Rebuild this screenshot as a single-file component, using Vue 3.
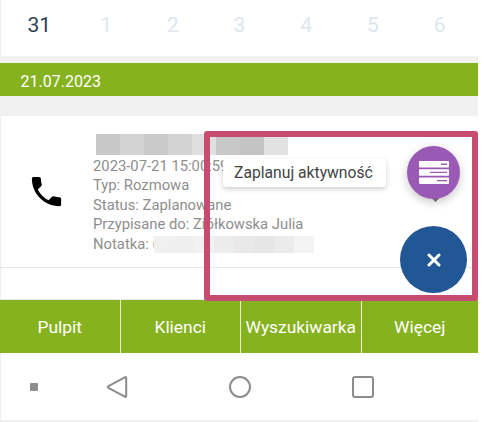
<script setup>
const days = [
  { label: '31', active: true },
  { label: '1' },
  { label: '2' },
  { label: '3' },
  { label: '4' },
  { label: '5' },
  { label: '6' },
]

const tabs = ['Pulpit', 'Klienci', 'Wyszukiwarka', 'Więcej']

const titleBlur = ['#c8c8c8', '#d3d3d3', '#c9c9c9', '#d3d3d3', '#dfdfdf', '#c8c8c8', '#c4c4c4', '#e2e2e2']
const noteBlur = ['#f0f0f0', '#efefef', '#f2f2f2', '#ececec', '#e9e9e9', '#e6e6e6', '#ebebeb', '#f3f3f3']
</script>

<template>
  <main class="screen">
    <div class="days">
      <span v-for="day in days" :key="day.label" class="day" :class="{ active: day.active }">{{ day.label }}</span>
    </div>

    <div class="date-bar">21.07.2023</div>

    <section class="card">
      <div class="card-icon">
        <svg width="39" height="39" viewBox="0 0 24 24">
          <path d="M6.62 10.79c1.44 2.83 3.76 5.14 6.59 6.59l2.2-2.2c.27-.27.67-.36 1.02-.24 1.12.37 2.33.57 3.57.57.55 0 1 .45 1 1V20c0 .55-.45 1-1 1-9.39 0-17-7.61-17-17 0-.55.45-1 1-1h3.5c.55 0 1 .45 1 1 0 1.25.2 2.45.57 3.57.11.35.03.74-.25 1.02l-2.2 2.2z" />
        </svg>
      </div>
      <div class="card-text">
        <div class="title-blur">
          <i v-for="(color, i) in titleBlur" :key="i" :style="{ background: color }"></i>
        </div>
        <p>2023-07-21 15:00:59</p>
        <p>Typ: Rozmowa</p>
        <p>Status: Zaplanowane</p>
        <p>Przypisane do: Ziółkowska Julia</p>
        <p class="note">
          <span>Notatka: (</span>
          <span class="note-blur">
            <i v-for="(color, i) in noteBlur" :key="i" :style="{ background: color }"></i>
          </span>
        </p>
      </div>
    </section>

    <div class="card-rest"></div>

    <nav class="tabs">
      <div v-for="tab in tabs" :key="tab" class="tab">{{ tab }}</div>
    </nav>

    <div class="system-nav">
      <span class="sys-dot"></span>
      <svg class="sys-back" width="22" height="24" viewBox="0 0 22 24">
        <path d="M19.3 2.2 2.4 11.1a1 1 0 0 0 0 1.8l16.9 8.9a.6.6 0 0 0 .9-.5V2.7a.6.6 0 0 0-.9-.5z" />
      </svg>
      <span class="sys-circle"></span>
      <span class="sys-square"></span>
    </div>

    <div class="highlight">
      <div class="tooltip">Zaplanuj aktywność</div>
      <span class="fab-caret"></span>
      <div class="fab-small">
        <svg width="30" height="23" viewBox="0 0 30 23">
          <path d="M0 .8A.8.8 0 0 1 .8 0h28.4a.8.8 0 0 1 .8.8v4.9a.8.8 0 0 1-.8.8H.8a.8.8 0 0 1-.8-.8zm22 1.7v1.4h6V2.500zM0 9a.8.8 0 0 1 .8-.8h28.400a.8.8 0 0 1 .8.8v4.900a.8.8 0 0 1-.8.8H.8a.8.8 0 0 1-.8-.8zm11 1.700v1.400h17v-1.400zM0 17.200a.8.8 0 0 1 .8-.8h28.400a.8.8 0 0 1 .8.8v4.900a.8.8 0 0 1-.8.8H.8a.8.8 0 0 1-.8-.8zm18 1.700v1.400h10v-1.400z" fill-rule="evenodd" />
        </svg>
      </div>
      <div class="fab-main">
        <svg width="14" height="14" viewBox="0 0 14 14">
          <path d="M2 2l10 10M12 2 2 12" />
        </svg>
      </div>
    </div>
  </main>
</template>

<style scoped>
* {
  margin: 0;
  padding: 0;
  box-sizing: border-box;
}

.screen {
  position: relative;
  width: 478px;
  height: 422px;
  background: #f1f1f1;
  font-family: Roboto, sans-serif;
  overflow: hidden;
}

.days {
  display: flex;
  height: 56px;
  padding: 0 5px;
  background: #fff;
  border-left: 1px solid #eee;
}

.day {
  width: 67px;
  text-align: center;
  line-height: 50px;
  font-size: 21px;
  color: #dde6ef;
}

.day.active {
  color: #2c3e50;
}

.date-bar {
  height: 33px;
  margin-top: 7px;
  padding-left: 20.5px;
  background: #86b21f;
  color: #fff;
  font-size: 16px;
  line-height: 37px;
}

.card {
  display: flex;
  height: 152px;
  margin-top: 20px;
  background: #fff;
  border-left: 1px solid #eee;
  border-bottom: 1px solid #e3e8ee;
}

.card-icon {
  display: flex;
  align-items: center;
  justify-content: center;
  width: 91px;
  margin-right: 1px;
}

.card-text {
  padding-top: 18px;
  font-size: 14.8px;
  line-height: 19.6px;
  color: #8e8e8e;
}

.title-blur,
.note-blur {
  display: flex;
}

.title-blur {
  height: 21px;
  margin-left: 3px;
  margin-bottom: 1.5px;
}

.title-blur i {
  width: 24px;
}

.note {
  position: relative;
}

.note-blur {
  position: absolute;
  left: 61px;
  top: 1px;
  height: 17px;
}

.note-blur i {
  width: 20px;
}

.card-rest {
  height: 32px;
  background: #fff;
  border-left: 1px solid #eee;
  border-bottom: 1px solid #e9e9e9;
}

.tabs {
  display: flex;
  height: 53px;
  background: #86b21f;
}

.tab {
  flex: 0 0 120.5px;
  text-align: center;
  line-height: 55px;
  font-size: 17.4px;
  color: #fff;
  border-right: 1px solid #e8efd2;
}

.tab:last-child {
  flex: 1;
  border-right: none;
}

.system-nav {
  position: relative;
  height: 67px;
  background: #fff;
  border-left: 1px solid #eee;
}

.sys-dot,
.sys-back,
.sys-circle,
.sys-square {
  position: absolute;
}

.sys-dot {
  left: 29px;
  top: 30px;
  width: 8px;
  height: 8px;
  border-radius: 1px;
  background: #8c8c8c;
}

.sys-back {
  left: 105px;
  top: 22px;
}

.sys-back path {
  fill: none;
  stroke: #8c8c8c;
  stroke-width: 2;
}

.sys-circle {
  left: 228px;
  top: 23px;
  width: 22px;
  height: 22px;
  border: 2px solid #8c8c8c;
  border-radius: 50%;
}

.sys-square {
  left: 351px;
  top: 23px;
  width: 22px;
  height: 22px;
  border: 2px solid #8c8c8c;
  border-radius: 3px;
}

.highlight {
  position: absolute;
  left: 204px;
  top: 131px;
  width: 274px;
  height: 170px;
  border: 6px solid #c64d6f;
  border-radius: 3px;
}

.tooltip {
  position: absolute;
  left: 13px;
  top: 22px;
  width: 163px;
  height: 28px;
  padding-left: 11px;
  background: #fff;
  border-radius: 3px;
  box-shadow: 0 2px 5px rgba(0, 0, 0, 0.2);
  font-size: 15.7px;
  line-height: 28px;
  color: #444;
}

.fab-small {
  position: absolute;
  left: 197px;
  top: 9px;
  display: flex;
  align-items: center;
  justify-content: center;
  width: 53px;
  height: 53px;
  border-radius: 50%;
  background: #9b59b6;
  box-shadow: 0 3px 10px rgba(0, 0, 0, 0.22);
}

.fab-small svg {
  fill: #fff;
}

.fab-caret {
  position: absolute;
  left: 223px;
  top: 59px;
  width: 5px;
  height: 5px;
  background: #7a7a7a;
  transform: rotate(45deg);
}

.fab-main {
  position: absolute;
  left: 190px;
  top: 89px;
  display: flex;
  align-items: center;
  justify-content: center;
  width: 67px;
  height: 67px;
  border-radius: 50%;
  background: #225795;
}

.fab-main path {
  fill: none;
  stroke: #fff;
  stroke-width: 3;
  stroke-linecap: round;
}
</style>
